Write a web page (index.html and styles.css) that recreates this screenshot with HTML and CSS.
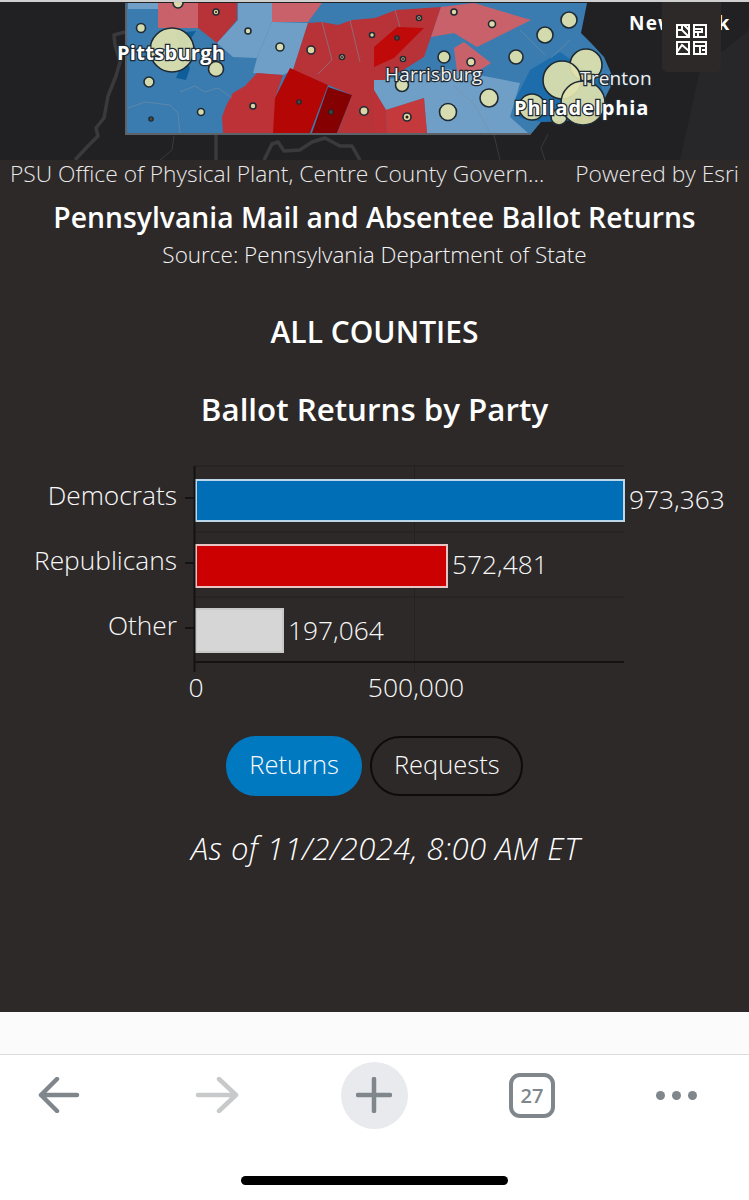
FILE: index.html
```html
<!DOCTYPE html>
<html lang="en">
<head>
<meta charset="utf-8">
<title>Pennsylvania Mail and Absentee Ballot Returns</title>
<link rel="stylesheet" href="styles.css">
</head>
<body>
<main class="page">
  <section class="map">
    <svg class="map-art" viewBox="0 0 749 160" width="749" height="160">
      <rect width="749" height="160" fill="#212124"/>
      <path d="M680 160 L700 70 L749 30 V160Z" fill="#272729"/>
      <g class="river">
        <path d="M75 160 L88 146 L98 136 L96 128 L104 118 L108 96 L116 76 L120 62 L115 45 L114 35 L125 32"/>
        <path d="M216 135 V160"/>
        <path d="M264 160 L272 144 L278 142 L284 151 L300 150 L312 142 L325 138 L340 146 L352 146 L360 160"/>
      </g>
      <path class="river-thin" d="M548 134 L541 148 L545 160 M174 136 L172 150 L160 160 M494 135 L500 160"/>
      <path class="state" d="M126 3 H587 L581 33 L591 43 L604 57 L614 80 L604 100 L574 120 L541 122 L531 134 H126Z"/>
      <path fill="#6f9fc6" d="M128 3H158V9H128Z"/>
      <path fill="#c9616a" d="M158 3H198V28H158Z"/>
      <path fill="#b83338" d="M198 3H237V20L217 43L198 28Z"/>
      <path fill="#6f9fc6" d="M238 3H272V22L257 58L233 57L217 43L238 20Z"/>
      <path fill="#6f9fc6" d="M272 22L308 23L293 70L283 75L253 73L257 58Z"/>
      <path fill="#c9616a" d="M272 3H322L308 22H272Z"/>
      <path fill="#b83338" d="M293 70L308 23L322 22L338 25L352 20L375 18L396 10L441 7L431 37L424 57L400 72L384 80L374 80V134H337L352 95L328 85Z"/>
      <path fill="#bd3237" d="M222 117L226 106L233 93L245 86L257 73L283 75L275 98L277 133H223Z"/>
      <path fill="#b50606" d="M290 68L328 85L310 133H273L275 98Z"/>
      <path fill="#850000" d="M328 87L352 95L337 133H312Z"/>
      <path fill="#c00a0a" d="M374 47L397 27L424 28L394 58L374 67Z"/>
      <path fill="#c9616a" d="M441 7L474 3L531 20L477 47L454 33L431 37Z"/>
      <path fill="#c9616a" d="M454 48L464 42L491 63L477 72L457 72Z"/>
      <path fill="#6f9fc6" d="M374 80L384 80L447 69L520 83L510 117L528 133H427L424 98L386 110L374 90Z"/>
      <path fill="#c4393c" d="M386 110L424 98L427 133H387Z"/>
      <path fill="#bd3237" d="M374 90L386 110L387 133H374Z"/>
      <path fill="#0f5d99" d="M176 33L196 31L182 52L190 68L186 80L176 78L183 62Z"/>
      <path fill="#1d6dad" d="M530 70L560 52L600 80L604 100L574 120L541 122L520 118L515 100Z"/>
      <g class="county-line">
        <path d="M128 108L145 102L170 105L178 113L180 133"/>
        <path d="M180 92L195 86L205 92L218 88L232 98"/>
        <path d="M453 85L475 105L490 133"/>
        <path d="M520 30L545 55M570 40L551 58"/>
        <path d="M322 22L332 60L318 74M350 20L360 62M395 10L400 27"/>
      </g>
      <path class="state-edge" d="M126 3V134H531"/>
      <g class="city">
        <circle cx="141" cy="28" r="4.5"/><circle cx="178" cy="3" r="5"/><circle cx="216" cy="12" r="3"/>
        <circle cx="248" cy="31" r="3"/><circle cx="280" cy="47" r="4"/><circle cx="311" cy="50" r="4"/>
        <circle cx="342" cy="57" r="2.5"/><circle cx="372" cy="35" r="2.5"/><circle cx="149" cy="82" r="5"/>
        <circle cx="201" cy="112" r="3.5"/><circle cx="151" cy="119" r="2"/><circle cx="253" cy="106" r="3"/>
        <circle cx="299" cy="102" r="2"/><circle cx="331" cy="112" r="2"/><circle cx="364" cy="111" r="4.2"/>
        <circle cx="172" cy="50" r="22"/><circle cx="216" cy="69" r="7.5"/>
        <circle cx="569" cy="20" r="8"/><circle cx="545" cy="35" r="8"/><circle cx="516" cy="57" r="7"/>
        <circle cx="444" cy="57" r="6"/><circle cx="402" cy="85" r="6.5"/><circle cx="489" cy="98" r="9"/>
        <circle cx="448" cy="112" r="8.5"/><circle cx="407" cy="117" r="4"/><circle cx="471" cy="62" r="4"/>
        <circle cx="403" cy="59" r="2.5"/><circle cx="397" cy="38" r="2"/><circle cx="419" cy="18" r="2.5"/>
        <circle cx="454" cy="12" r="3"/><circle cx="492" cy="24" r="3.5"/>
        <circle cx="586" cy="65" r="16"/><circle cx="562" cy="80" r="19"/><circle cx="532" cy="107" r="13"/>
        <circle cx="559" cy="117" r="8"/><circle cx="583" cy="103" r="22"/>
      </g>
      <g class="dot">
        <circle cx="216" cy="12" r="1"/><circle cx="151" cy="119" r="1"/><circle cx="299" cy="102" r="1"/>
        <circle cx="331" cy="112" r="1"/><circle cx="342" cy="57" r="1"/><circle cx="397" cy="38" r="1"/>
        <circle cx="419" cy="18" r="1"/><circle cx="403" cy="59" r="1"/><circle cx="407" cy="117" r="1.5"/>
      </g>
      <text class="label bold" x="117" y="60">Pittsburgh</text>
      <text class="label thin" x="385" y="81">Harrisburg</text>
      <text class="label thin" x="580" y="85">Trenton</text>
      <text class="label bold large" x="514" y="115">Philadelphia</text>
      <text class="label bold plain" x="629" y="30">New York</text>
    </svg>
    <div class="basemap-button">
      <svg viewBox="0 0 32 32" width="32" height="32">
        <g class="tile">
          <rect x="1" y="1" width="12" height="12"/><rect x="18" y="1" width="12" height="12"/>
          <rect x="1" y="18" width="12" height="12"/><rect x="18" y="18" width="12" height="12"/>
          <path d="M1 6H6V1M6 6L13 13M8 1L13 6"/>
          <path d="M18 5H26V8H18M22 8V13"/>
          <path d="M1 28L6 21L13 27"/>
          <path d="M18 22H30M24 22V30H30M26 26H30"/>
        </g>
      </svg>
    </div>
  </section>

  <div class="attribution">
    <span class="credits">PSU Office of Physical Plant, Centre County Govern…</span>
    <span class="powered">Powered by Esri</span>
  </div>

  <header class="heading">
    <h1>Pennsylvania Mail and Absentee Ballot Returns</h1>
    <p>Source: Pennsylvania Department of State</p>
  </header>

  <h2 class="region">ALL COUNTIES</h2>
  <h2 class="chart-title">Ballot Returns by Party</h2>

  <svg class="chart" viewBox="0 0 749 248" width="749" height="248">
    <g class="grid">
      <path d="M195 6H624M195 72H624M195 137H624M414.500 6V212"/>
    </g>
    <rect class="bar dem" x="196" y="20" width="428" height="41"/>
    <rect class="bar rep" x="196" y="85" width="251" height="42"/>
    <rect class="bar oth" x="196" y="149" width="87" height="43"/>
    <g class="axis">
      <path d="M194.500 6V212M194 202H624M185 38H194M185 103H194M185 168H194"/>
    </g>
    <g class="cat">
      <text x="177" y="45">Democrats</text>
      <text x="177" y="110">Republicans</text>
      <text x="177" y="175">Other</text>
    </g>
    <g class="val">
      <text x="629" y="49">973,363</text>
      <text x="452" y="114">572,481</text>
      <text x="288" y="180">197,064</text>
    </g>
    <g class="tick">
      <text x="196" y="237">0</text>
      <text x="416" y="237">500,000</text>
    </g>
  </svg>

  <div class="toggle">
    <button class="pill active" type="button">Returns</button>
    <button class="pill" type="button">Requests</button>
  </div>

  <p class="asof">As of 11/2/2024, 8:00 AM ET</p>
</main>

<div class="strip"></div>

<nav class="toolbar">
  <svg class="ico" viewBox="0 0 44 36" width="44" height="36"><path class="stroke" d="M41 18H5M21 2L5 18L21 34"/></svg>
  <svg class="ico faded" viewBox="0 0 44 36" width="44" height="36"><path class="stroke" d="M3 18H41M24 2L41 18L24 34"/></svg>
  <div class="new-tab"><svg viewBox="0 0 36 36" width="36" height="36"><path class="stroke" d="M18 2V34M2 18H34"/></svg></div>
  <div class="tabs">27</div>
  <div class="more"><i></i><i></i><i></i></div>
</nav>
<div class="home"><span></span></div>
</body>
</html>
```
FILE: styles.css
```css
* { box-sizing: border-box; }
html, body { margin: 0; padding: 0; }
body {
  width: 749px;
  height: 1200px;
  overflow: hidden;
  background: #fff;
  font-family: "Open Sans", Lato, sans-serif;
  color: #fff;
}
.page {
  height: 1012px;
  background: #2d2929;
  border-top: 2px solid #cfcfcf;
  display: flex;
  flex-direction: column;
  align-items: center;
}
.map { position: relative; width: 749px; height: 158px; overflow: hidden; flex: none; }
.map-art { display: block; margin-top: -2px; }
.river path { fill: none; stroke: #3a3a3d; stroke-width: 3.500; stroke-linejoin: round; }
.river-thin { fill: none; stroke: #3a3a3d; stroke-width: 1; }
.state { fill: #3a7cb0; }
.state-edge { fill: none; stroke: #5d6268; stroke-width: 2; }
.county-line path { fill: none; stroke: #7b8ea3; stroke-width: 0.8; opacity: 0.7; }
.city circle { fill: #dfe2ae; stroke: #1f2a33; stroke-width: 1.600; fill-opacity: 0.92; }
.dot circle { fill: #2a1a14; }
.label {
  font-family: "Open Sans", sans-serif;
  fill: #fff;
  stroke: #1f2a33;
  stroke-width: 2.500;
  paint-order: stroke;
}
.label.bold { font-size: 20px; font-weight: 700; letter-spacing: 0.3px; }
.label.large { font-size: 20px; letter-spacing: 0.9px; }
.label.thin { font-size: 19px; font-weight: 400; fill: #f1f1f1; letter-spacing: 0.2px; }
.label.plain { font-size: 19px; stroke: none; letter-spacing: 1.200px; }
.basemap-button {
  position: absolute;
  top: 0;
  left: 662px;
  width: 59px;
  height: 70px;
  border-radius: 0 0 5px 5px;
  background: #2d2929;
  display: flex;
  align-items: center;
  justify-content: center;
  padding-top: 6px;
}
.tile * { fill: none; stroke: #fff; stroke-width: 2; }

.attribution {
  flex: none;
  width: 749px;
  height: 26px;
  padding: 0 10px;
  display: flex;
  justify-content: space-between;
  align-items: center;
  font-size: 22.800px;
  font-weight: 300;
  color: #e8e8e8;
  white-space: nowrap;
}
.heading { margin-top: 13px; text-align: center; }
.heading h1 { margin: 0; font-size: 28.300px; line-height: 36px; font-weight: 600; white-space: nowrap; }
.heading p { margin: 2px 0 0; font-size: 22.500px; line-height: 36px; font-weight: 300; color: #f4f4f4; }
.region { margin: 41px 0 0; font-size: 30px; line-height: 36px; font-weight: 600; }
.chart-title { margin: 41px 0 0; font-size: 31.300px; line-height: 36px; font-weight: 600; }
.chart { display: block; flex: none; margin-top: 33px; }
.grid path { fill: none; stroke: #252121; stroke-width: 1; }
.axis path { fill: none; stroke: #141212; stroke-width: 2; }
.bar { stroke-width: 2; }
.dem { fill: #006eb6; stroke: #bcd6ea; }
.rep { fill: #cc0000; stroke: #e8c4c4; }
.oth { fill: #d6d6d6; stroke: #c8c8c8; }
.chart text { fill: #f8f8f8; font-weight: 300; }
.cat text { text-anchor: end; font-size: 26.300px; }
.val text { font-size: 26.300px; }
.tick text { text-anchor: middle; font-size: 26.500px; }

.toggle { display: flex; gap: 8px; margin-top: 28px; }
.pill {
  height: 60px;
  padding: 0 21.500px 4px;
  border-radius: 30px;
  border: 2px solid #0d0b0b;
  background: transparent;
  color: #fafafa;
  font: 300 25.500px "Open Sans", sans-serif;
}
.pill.active { background: #0079c1; border-color: #0079c1; }
.asof { margin: 34px 0 0 22px; font-size: 31px; line-height: 36px; font-style: italic; font-weight: 300; letter-spacing: 0.5px; white-space: nowrap; }

.strip { height: 43px; background: #fbfbfc; border-bottom: 1px solid #dcdcdc; }
.toolbar {
  display: grid;
  grid-template-columns: 116px 202px 112px 204px 84px;
  justify-items: center;
  align-items: center;
  height: 84px;
  padding-bottom: 4px;
}
.stroke { fill: none; stroke: #7f868c; stroke-width: 4.500; stroke-linecap: round; stroke-linejoin: round; }
.faded .stroke { stroke: #c8c9cb; }
.new-tab {
  width: 67px;
  height: 67px;
  border-radius: 50%;
  background: #e9eaee;
  display: flex;
  align-items: center;
  justify-content: center;
}
.new-tab svg { display: block; }
.tabs {
  width: 46px;
  height: 45px;
  border: 4px solid #7f868c;
  border-radius: 11px;
  display: flex;
  align-items: center;
  justify-content: center;
  color: #7f868c;
  font-size: 20px;
  font-weight: 600;
}
.more { display: flex; gap: 7px; }
.more i { display: block; width: 9px; height: 9px; border-radius: 50%; background: #7f868c; }
.home { display: flex; justify-content: center; margin-top: 37px; padding-right: 1px; }
.home span { display: block; width: 267px; height: 9px; border-radius: 5px; background: #000; }
```
